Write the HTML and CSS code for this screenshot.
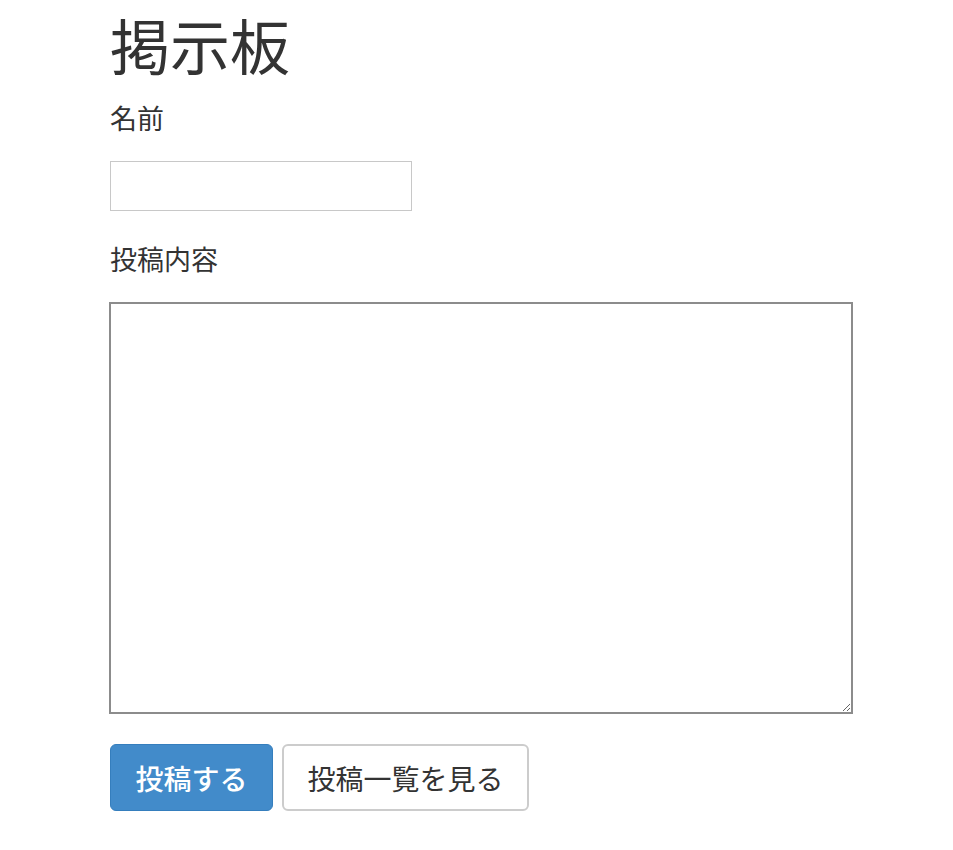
FILE: index.html
```html
<!DOCTYPE html>
<html lang="ja">
<head>
<meta charset="utf-8">
<title>掲示板</title>
<link rel="stylesheet" href="styles.css">
</head>
<body>
<div class="container">
  <h1 class="title">掲示板</h1>
  <form class="form">
    <div class="field">
      <label class="label" for="name">名前</label>
      <input class="input" id="name" type="text">
    </div>
    <div class="field">
      <label class="label" for="body">投稿内容</label>
      <textarea class="textarea" id="body"></textarea>
    </div>
    <div class="actions">
      <button type="submit" class="btn btn-primary">投稿する</button>
      <button type="button" class="btn btn-default">投稿一覧を見る</button>
    </div>
  </form>
</div>
</body>
</html>
```
FILE: styles.css
```css
* { box-sizing: border-box; }
html, body { margin: 0; padding: 0; background: #fff; }
body {
  font-family: "Noto Sans CJK JP", "Noto Sans", sans-serif;
  color: #333;
}
.container {
  padding: 0 0 0 110px;
}
.title {
  margin: 0;
  padding-top: 4px;
  font-size: 60px;
  font-weight: 400;
  line-height: 80px;
}
.form {
  display: flex;
  flex-direction: column;
}
.field {
  display: flex;
  flex-direction: column;
  align-items: flex-start;
}
.label {
  font-size: 27px;
  line-height: 38px;
  margin-top: 15px;
  margin-bottom: 24px;
}
.input {
  width: 302px;
  height: 50px;
  border: 1px solid #c8c8c8;
  border-radius: 0;
  font-size: 24px;
  padding: 4px 8px;
  margin: 0;
  outline: none;
}
.field + .field .label { margin-top: 29px; }
.textarea {
  width: 744px;
  height: 412px;
  border: 2px solid #8c8c8c;
  border-radius: 0;
  margin: 0 0 0 -1px;
  padding: 4px;
  font-size: 24px;
  font-family: inherit;
  outline: none;
}
.actions {
  display: flex;
  gap: 9px;
  margin-top: 30px;
}
.btn {
  height: 67px;
  font-family: inherit;
  font-size: 28px;
  border-radius: 6px;
  padding: 0;
  margin: 0;
  cursor: pointer;
}
.btn-primary {
  background: #428bca;
  border: 1px solid #357ebd;
  color: #fff;
  width: 163px;
  font-weight: 500;
}
.btn-default {
  background: #fff;
  border: 2px solid #ccc;
  color: #333;
  width: 247px;
}
```
